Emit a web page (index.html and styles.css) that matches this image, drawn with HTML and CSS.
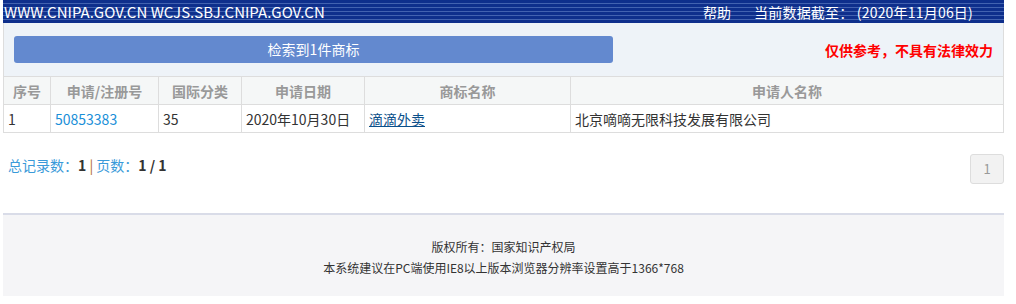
FILE: index.html
```html
<!DOCTYPE html>
<html lang="zh-CN">
<head>
  <meta charset="UTF-8" />
  <title>商标检索结果</title>
  <link rel="stylesheet" href="styles.css">
</head>
<body>

<div class="wrap">
  <!-- top bar -->
  <header class="topbar">
    <span class="site">WWW.CNIPA.GOV.CN WCJS.SBJ.CNIPA.GOV.CN</span>
    <span class="help">帮助</span>
    <span class="date">当前数据截至： (2020年11月06日)</span>
  </header>

  <div class="result">
    <div class="result-head">
      <div class="count-btn">检索到1件商标</div>
      <div class="notice">仅供参考，不具有法律效力</div>
    </div>
    <table class="list">
      <thead>
        <tr>
          <th class="c1">序号</th>
          <th class="c2">申请/注册号</th>
          <th class="c3">国际分类</th>
          <th class="c4">申请日期</th>
          <th class="c5">商标名称</th>
          <th>申请人名称</th>
        </tr>
      </thead>
      <tbody>
        <tr>
          <td>1</td>
          <td><a class="regno" href="#">50853383</a></td>
          <td>35</td>
          <td>2020年10月30日</td>
          <td><a class="tmname" href="#">滴滴外卖</a></td>
          <td>北京嘀嘀无限科技发展有限公司</td>
        </tr>
      </tbody>
    </table>
  </div>

  <div class="pager">
    <div class="total">总记录数：<b>1</b> <span class="sep">|</span> 页数：<b>1 / 1</b></div>
    <a class="page" href="#">1</a>
  </div>

  <footer class="foot">
    <p>版权所有：国家知识产权局</p>
    <p>本系统建议在PC端使用IE8以上版本浏览器分辨率设置高于1366*768</p>
  </footer>
</div>

</body>
</html>
```

FILE: styles.css
```css
body {
  margin: 0;
  padding: 0;
  background: #fff;
  font-family: "Noto Sans CJK SC", "Noto Sans", sans-serif;
  color: #333;
}
.wrap {
  width: 1001px;
  margin-left: 3px;
}
.topbar {
  display: flex;
  align-items: center;
  height: 23px;
  background-color: #0e2f8c;
  background-image: repeating-linear-gradient(to bottom, #0e2f8c 0, #0e2f8c 3px, #4262b0 3px, #4262b0 4px);
  color: #fff;
  font-size: 15px;
  white-space: nowrap;
}
.site {
  padding-left: 1px;
}
.help {
  margin-left: auto;
  font-size: 14px;
}
.date {
  margin-left: 23px;
  margin-right: 31px;
  font-size: 14px;
  letter-spacing: 0.2px;
}
.result {
  border: 1px solid #ddd;
  border-top: 0;
}
.result-head {
  display: flex;
  align-items: center;
  height: 53px;
  padding: 0 10px;
  background: #eef3f8;
  border-bottom: 1px solid #ddd;
}
.count-btn {
  width: 599px;
  height: 27px;
  line-height: 27px;
  background: #6389cf;
  border-radius: 3px;
  color: #fff;
  font-size: 14px;
  text-align: center;
}
.notice {
  margin-left: auto;
  color: #f00;
  font-weight: bold;
  font-size: 14px;
}
.list {
  width: 100%;
  border-collapse: collapse;
  font-size: 14px;
}
.list th {
  height: 27px;
  background: #f5f7f7;
  color: #999;
  font-size: 14px;
  font-weight: bold;
  border-right: 1px solid #ddd;
  border-bottom: 1px solid #ddd;
  padding: 0;
}
.list td {
  height: 27px;
  padding: 0 4px;
  border-right: 1px solid #ddd;
  color: #333;
}
.list th:last-child,
.list td:last-child {
  border-right: 0;
}
.c1 { width: 46px; }
.c2 { width: 107px; }
.c3 { width: 82px; }
.c4 { width: 122px; }
.c5 { width: 205px; }
.regno {
  color: #1a8fd8;
  text-decoration: none;
}
.tmname {
  color: #0b4f8a;
  text-decoration: underline;
}
.pager {
  display: flex;
  justify-content: space-between;
  align-items: flex-start;
  height: 80px;
  padding: 21px 0 0 5px;
  box-sizing: border-box;
}
.total {
  margin-top: 1px;
  color: #3a9ad9;
  font-size: 14px;
}
.total b {
  color: #333;
}
.sep {
  color: #b06a2a;
}
.page {
  display: block;
  width: 32px;
  height: 28px;
  line-height: 28px;
  text-align: center;
  background: #f2f2f2;
  border: 1px solid #ddd;
  border-radius: 3px;
  color: #999;
  font-size: 13px;
  text-decoration: none;
}
.foot {
  height: 83px;
  border-top: 2px solid #d9dce8;
  background: #f5f5f7;
  text-align: center;
  font-size: 12px;
  color: #333;
  padding-top: 21px;
  box-sizing: border-box;
}
.foot p {
  margin: 0;
  line-height: 21px;
}
```
